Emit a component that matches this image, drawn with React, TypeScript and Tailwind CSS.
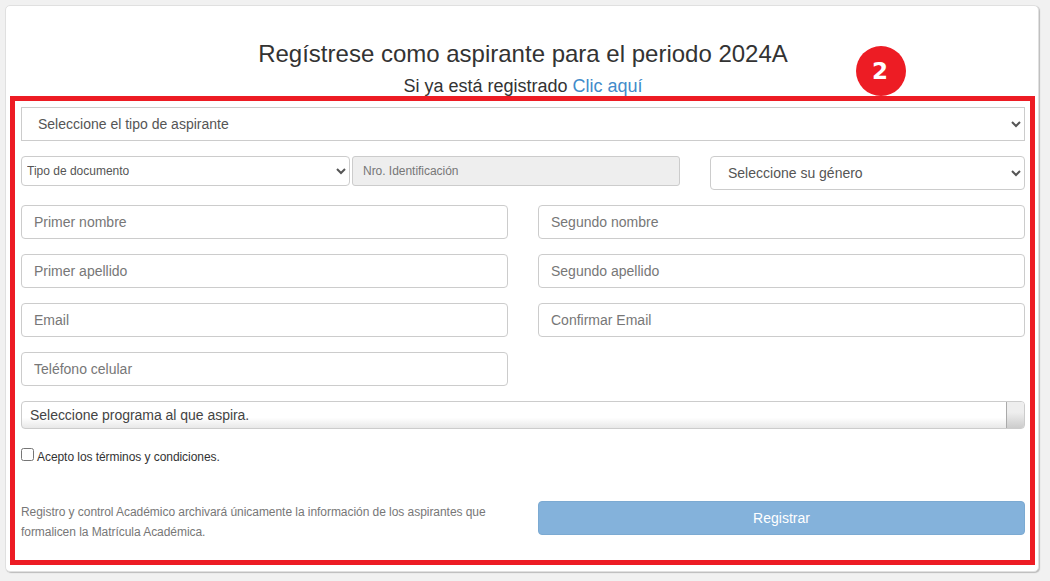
const fieldCls =
  'h-[34px] w-full rounded-[4px] border border-[#ccc] bg-white px-3 text-sm text-[#555] placeholder:text-[#777] outline-none';

const selectCls = 'border border-[#ccc] bg-white text-[#555] outline-none';

const namePairs = [
  ['Primer nombre', 'Segundo nombre'],
  ['Primer apellido', 'Segundo apellido'],
  ['Email', 'Confirmar Email'],
  ['Teléfono celular', ''],
];

export default function App() {
  return (
    <div className="h-[581px] w-[1050px] overflow-hidden bg-[#f1f1f1] pt-[5px] pl-[5px] font-['Liberation_Sans',Arial,sans-serif]">
      <div className="h-[567px] w-[1034px] rounded-[5px] border border-[#e0e0e0] bg-white pl-1 pr-0.5 pt-[29px] shadow-[1px_1px_1px_#bbb]">
        <h1 className="h-[38px] text-center text-2xl leading-[38px] text-[#333]">
          Regístrese como aspirante para el periodo 2024A
        </h1>
        <p className="mt-px h-[22px] text-center text-lg leading-[24px] text-[#333]">
          Si ya está registrado <a className="text-[#428bca]">Clic aquí</a>
        </p>

        <div className="relative h-[469px] w-[1025px] border-[5px] border-[#ed1c24] pt-1.5 pr-[5px] pl-1.5">
          <div className="absolute -top-[55px] left-[841px] flex h-[50px] w-[50px] items-center justify-center rounded-full bg-[#ed1c24] pr-0.5 font-['DejaVu_Sans',sans-serif] text-[23px] leading-none font-bold text-white">
            2
          </div>

          <select className={`${selectCls} h-[34px] w-full pl-3 text-sm`}>
            <option>Seleccione el tipo de aspirante</option>
          </select>

          <div className="mt-[15px] flex items-start">
            <select className={`${selectCls} h-[30px] w-[329px] rounded-[4px] pl-px text-xs`}>
              <option>Tipo de documento</option>
            </select>
            <input
              disabled
              placeholder="Nro. Identificación"
              className="ml-0.5 h-[30px] w-[328px] rounded-[3px] border border-[#ccc] bg-[#eee] px-2.5 text-xs tracking-[-0.03px] placeholder:text-[#777]"
            />
            <select className={`${selectCls} ml-[30px] h-[34px] w-[315px] rounded-[4px] pl-[13px] text-sm`}>
              <option>Seleccione su género</option>
            </select>
          </div>

          <div className="mt-[15px] grid grid-cols-2 gap-x-[30px] gap-y-[15px]">
            {namePairs.map(([left, right]) => (
              <div key={left} className="contents">
                <input className={fieldCls} placeholder={left} />
                {right ? <input className={fieldCls} placeholder={right} /> : <div />}
              </div>
            ))}
          </div>

          <div className="mt-[15px] flex h-7 overflow-hidden rounded-[4px] border border-[#ccc] bg-gradient-to-b from-white from-60% to-[#e8e8e8]">
            <span className="flex-1 pl-2 text-sm leading-[27px] tracking-[-0.03px] text-[#444]">Seleccione programa al que aspira.</span>
            <span className="w-[18px] border-l border-[#aaa] bg-gradient-to-b from-[#eee] from-40% to-[#ccc]" />
          </div>

          <label className="mt-[19px] flex h-[13px] items-center text-xs text-[#333]">
            <input type="checkbox" className="h-[13px] w-[13px]" />
            <span className="mt-1 ml-[3px] tracking-[-0.06px]">Acepto los términos y condiciones.</span>
          </label>

          <div className="mt-10 grid grid-cols-2 gap-x-[30px]">
            <p className="mt-px text-xs leading-[20px] tracking-[-0.05px] text-[#777]">
              Registro y control Académico archivará únicamente la información de los aspirantes que formalicen la Matrícula Académica.
            </p>
            <button className="h-[34px] rounded-[4px] border border-[#7caad2] bg-[#84b2db] text-sm text-white">
              Registrar
            </button>
          </div>
        </div>
      </div>
    </div>
  );
}
